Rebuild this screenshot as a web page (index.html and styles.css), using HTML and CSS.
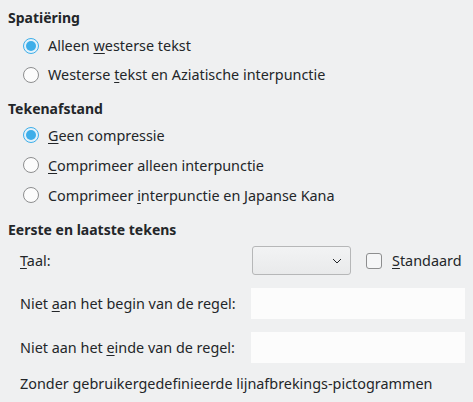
FILE: index.html
```html
<!DOCTYPE html>
<html>
<head>
    <meta charset="UTF-8">
    <title>Aziatische typografie</title>
    <link rel="stylesheet" href="styles.css">
</head>
<body>
    <div class="page">
        <div class="heading">Spatiëring</div>
        <div class="group tight">
            <label class="option"><span class="radio checked"></span><span>Alleen <u>w</u>esterse tekst</span></label>
            <label class="option"><span class="radio"></span><span>Westerse <u>t</u>ekst en Aziatische interpunctie</span></label>
        </div>

        <div class="heading">Tekenafstand</div>
        <div class="group">
            <label class="option"><span class="radio checked"></span><span><u>G</u>een compressie</span></label>
            <label class="option"><span class="radio"></span><span><u>C</u>omprimeer alleen interpunctie</span></label>
            <label class="option"><span class="radio"></span><span>Comprimeer <u>i</u>nterpunctie en Japanse Kana</span></label>
        </div>

        <div class="heading">Eerste en laatste tekens</div>
        <div class="form">
            <div class="label"><u>T</u>aal:</div>
            <div class="field-row">
                <div class="combo"><svg width="10" height="6" viewBox="0 0 10 6"><path d="M1 1 L5 5 L9 1" fill="none" stroke="#232629" stroke-width="1"/></svg></div>
                <span class="checkbox"></span>
                <span><u>S</u>tandaard</span>
            </div>

            <div class="label">Niet <u>a</u>an het begin van de regel:</div>
            <div class="input"></div>

            <div class="label">Niet aan het <u>e</u>inde van de regel:</div>
            <div class="input"></div>
        </div>
        <div class="note">Zonder gebruikergedefinieerde lijnafbrekings-pictogrammen</div>
    </div>
</body>
</html>
```

FILE: styles.css
```css
* {
    box-sizing: border-box;
}

body {
    margin: 0;
    background: #eff0f1;
    color: #232629;
    font-family: "Noto Sans", sans-serif;
    font-size: 14.4px;
}

.page {
    padding: 8px 8px 0 8px;
}

u {
    text-decoration-thickness: 1px;
    text-underline-offset: 2px;
}

.heading {
    font-weight: bold;
    font-size: 14px;
    height: 20px;
    line-height: 20px;
    margin-top: 10px;
}

.heading:first-child {
    margin-top: 0;
}

.group {
    padding-left: 15px;
    margin-top: 1px;
}

.group.tight {
    margin-top: 3px;
}

.option {
    display: flex;
    align-items: center;
    height: 30px;
}

.group.tight .option {
    height: 29px;
}

.radio {
    width: 16px;
    height: 16px;
    border-radius: 50%;
    border: 1px solid #8d8e8f;
    background: #fcfcfc;
    margin-right: 9px;
    flex-shrink: 0;
}

.radio.checked {
    border-color: #3daee9;
    background: #e3f2fb;
    position: relative;
}

.radio.checked::after {
    content: "";
    position: absolute;
    left: 2px;
    top: 2px;
    width: 10px;
    height: 10px;
    border-radius: 50%;
    background: #3daee9;
}

.form {
    display: grid;
    grid-template-columns: 231px 214px;
    row-gap: 13px;
    padding-left: 12px;
    margin-top: 6px;
    align-items: center;
}

.field-row {
    display: flex;
    align-items: center;
    height: 29px;
}

.combo {
    width: 99px;
    height: 29px;
    margin-left: 1px;
    border: 1px solid #b6b7b8;
    border-radius: 3px;
    background: linear-gradient(#f2f3f4, #e9eaeb);
    display: flex;
    align-items: center;
    justify-content: flex-end;
    padding-right: 8px;
}

.checkbox {
    width: 16px;
    height: 16px;
    border: 1px solid #8d8e8f;
    border-radius: 3px;
    background: #f5f6f7;
    margin-left: 15px;
    margin-right: 10px;
}

.input {
    height: 31px;
    background: #fcfcfc;
}

.note {
    padding-left: 12px;
    height: 20px;
    line-height: 20px;
    margin-top: 11px;
}
```
